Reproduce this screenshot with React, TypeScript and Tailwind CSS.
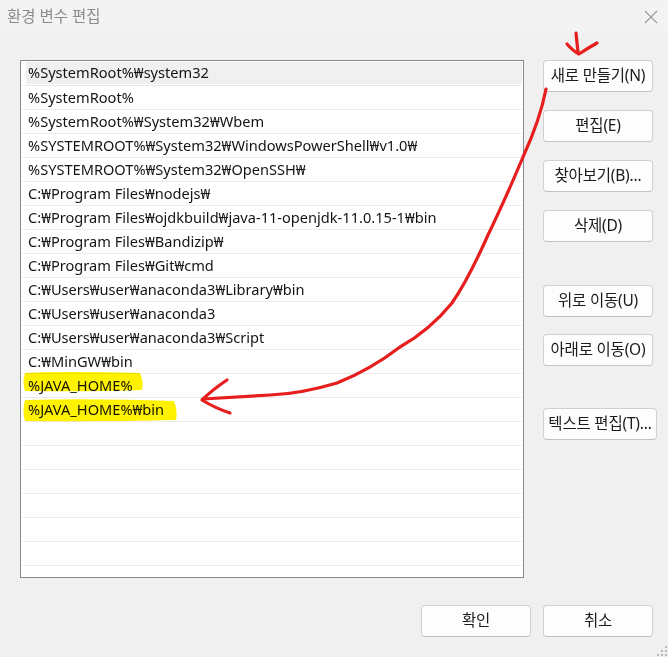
import React from 'react';

const paths = [
  '%SystemRoot%₩system32',
  '%SystemRoot%',
  '%SystemRoot%₩System32₩Wbem',
  '%SYSTEMROOT%₩System32₩WindowsPowerShell₩v1.0₩',
  '%SYSTEMROOT%₩System32₩OpenSSH₩',
  'C:₩Program Files₩nodejs₩',
  'C:₩Program Files₩ojdkbuild₩java-11-openjdk-11.0.15-1₩bin',
  'C:₩Program Files₩Bandizip₩',
  'C:₩Program Files₩Git₩cmd',
  'C:₩Users₩user₩anaconda3₩Library₩bin',
  'C:₩Users₩user₩anaconda3',
  'C:₩Users₩user₩anaconda3₩Script',
  'C:₩MinGW₩bin',
  '%JAVA_HOME%',
  '%JAVA_HOME%₩bin',
];

const font = { fontFamily: '"Noto Sans", "Noto Sans CJK KR", sans-serif' };

const DlgButton = ({ label, className = '' }: { label: string; className?: string }) => (
  <button
    className={`h-[32px] w-[110px] rounded-[4px] border border-[#d0d0d0] border-b-[#c2c2c2] bg-[#fdfdfd] text-[15.5px] tracking-[-0.2px] text-[#1b1b1b] whitespace-nowrap ${className}`}
  >
    {label}
  </button>
);

const App = () => {
  const rows = [...paths, ...Array(7).fill('')];

  return (
    <div className="relative w-[668px] h-[657px] bg-[#f0f0f0] flex flex-col overflow-hidden" style={font}>
      {/* 타이틀 바 */}
      <div className="h-[33px] bg-[#f3f3f3] flex items-center justify-between pl-[7px] pr-[9px]">
        <span className="text-[15.5px] text-[#8b8b8b]">환경 변수 편집</span>
        <svg width="14" height="14" viewBox="0 0 14 14" className="mr-[1px]">
          <path d="M1 1 L13 13 M13 1 L1 13" stroke="#9a9a9a" strokeWidth="1.1" />
        </svg>
      </div>

      {/* 목록 + 버튼 */}
      <div className="flex pt-[27px] pl-[20px] gap-[19px]">
        <div className="w-[504px] h-[518px] border border-[#868a8e] bg-white p-px overflow-hidden">
          {rows.map((p, i) => (
            <div key={i} className="h-[24px] border-b border-[#ebebeb] text-[14.6px] text-[#141414]">
              {i === 0 ? (
                <div className="h-[22px] ml-[4px] bg-[#f0f0f0] pl-[2px] flex items-center">{p}</div>
              ) : (
                <div className="h-full pl-[6px] flex items-center">{p}</div>
              )}
            </div>
          ))}
        </div>

        <div className="flex flex-col">
          <DlgButton label="새로 만들기(N)" />
          <DlgButton label="편집(E)" className="mt-[18px]" />
          <DlgButton label="찾아보기(B)..." className="mt-[18px]" />
          <DlgButton label="삭제(D)" className="mt-[18px]" />
          <DlgButton label="위로 이동(U)" className="mt-[43px]" />
          <DlgButton label="아래로 이동(O)" className="mt-[17px]" />
          <DlgButton label="텍스트 편집(T)..." className="mt-[42px] w-[114px]" />
        </div>
      </div>

      {/* 하단 버튼 */}
      <div className="flex justify-end gap-[12px] pt-[27px] pr-[15px]">
        <DlgButton label="확인" />
        <DlgButton label="취소" />
      </div>

      {/* 크기 조절 그립 */}
      <svg width="12" height="12" viewBox="0 0 12 12" className="absolute right-0 bottom-0">
        {[
          [9, 1], [9, 5], [5, 5], [9, 9], [5, 9], [1, 9],
        ].map(([x, y], i) => (
          <rect key={i} x={x} y={y} width="2" height="2" fill="#b8b8b8" />
        ))}
      </svg>

      {/* 주석: 형광펜 + 빨간 화살표 */}
      <svg width="668" height="657" className="absolute inset-0 pointer-events-none">
        <g style={{ mixBlendMode: 'multiply' }}>
          <path d="M25 373 Q60 371 140 373 Q144 381 142 390 Q80 392 25 391 Q22 382 25 373 Z" fill="#fff200" />
          <path d="M25 400 Q90 398 174 401 Q178 410 176 420 Q100 422 25 421 Q22 410 25 400 Z" fill="#fff200" />
        </g>
        <g fill="none" stroke="#e61e1e" strokeWidth="3.2" strokeLinecap="round" strokeLinejoin="round">
          <path d="M576 33 Q577 43 578 52" />
          <path d="M567 44 Q573 51 579 54 Q588 48 597 43" />
          <path d="M546 89 Q540 120 523 157 Q505 200 488 235 Q468 280 452 303 Q430 330 400 347 Q370 370 337 383 Q300 394 270 395 Q235 397 203 399" />
          <path d="M227 380 Q212 390 202 400 Q215 408 230 413" />
        </g>
      </svg>
    </div>
  );
};

export default App;
